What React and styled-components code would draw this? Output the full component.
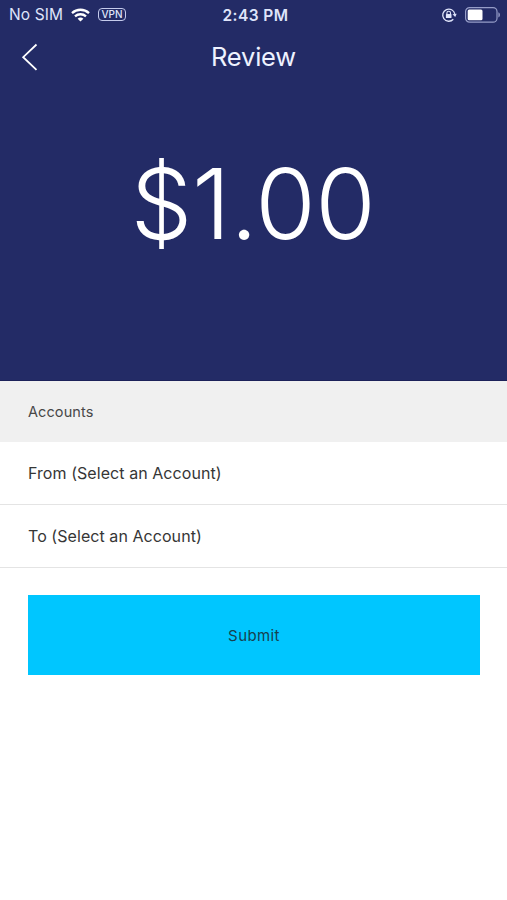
import React from "react";
import styled, { createGlobalStyle } from "styled-components";

const GlobalStyle = createGlobalStyle`
  * { box-sizing: border-box; }
  body { margin: 0; background: #fff; font-family: Inter, "Liberation Sans", sans-serif; }
`;

const Screen = styled.main`
  display: flex;
  flex-direction: column;
  width: 100%;
  height: 900px;
  overflow: hidden;
  background: #fff;
`;

const Hero = styled.header`
  display: flex;
  flex-direction: column;
  height: 381px;
  background: #232b66;
  border-bottom: 1px solid #1c2159;
  color: #fff;
`;

const StatusBar = styled.div`
  display: grid;
  grid-template-columns: 1fr auto 1fr;
  align-items: center;
  height: 30px;
  padding: 0 6px 0 9px;
  color: #dfe4fa;
`;

const StatusGroup = styled.div`
  display: flex;
  align-items: center;
  justify-content: ${({ $end }) => ($end ? "flex-end" : "flex-start")};
  gap: 8px;
`;

const Carrier = styled.span`
  font-size: 15.5px;
  line-height: 20px;
  letter-spacing: 0.1px;
  white-space: nowrap;
`;

const Clock = styled.span`
  padding: 1px 0 0 1px;
  font-size: 15.5px;
  font-weight: 600;
  line-height: 20px;
  letter-spacing: 0.45px;
`;

const VpnBadge = styled.span`
  display: flex;
  align-items: center;
  justify-content: center;
  width: 28px;
  height: 13px;
  margin-bottom: 1px;
  border: 1px solid #c5cbec;
  border-radius: 4px;
  font-size: 10px;
  font-weight: 500;
  line-height: 11px;
`;

const NavBar = styled.nav`
  display: grid;
  grid-template-columns: 60px 1fr 60px;
  align-items: center;
  height: 54px;
`;

const BackButton = styled.button`
  display: flex;
  align-items: center;
  height: 54px;
  padding: 0 0 0 21px;
  border: 0;
  background: none;
  color: #fff;
`;

const Title = styled.h1`
  margin: 0;
  font-size: 25.5px;
  font-weight: 400;
  line-height: 32px;
  letter-spacing: -0.2px;
  text-align: center;
  color: #eef2ff;
`;

const Amount = styled.div`
  padding: 60px 1px 0 0;
  font-size: 98px;
  font-weight: 300;
  line-height: 120px;
  letter-spacing: -0.3px;
  text-align: center;
  white-space: nowrap;
`;

const SectionHeader = styled.h2`
  display: flex;
  align-items: center;
  height: 61px;
  margin: 0;
  padding: 0 28px;
  background: #f0f0f0;
  color: #484848;
  font-size: 14.5px;
  font-weight: 400;
  letter-spacing: 0.1px;
`;

const AccountRow = styled.div`
  display: flex;
  align-items: center;
  height: 63px;
  padding: 0 28px;
  border-bottom: 1px solid #e4e4e4;
  color: #363636;
  font-size: 16px;
  letter-spacing: 0.06px;
`;

const Actions = styled.div`
  padding: 27px 27px 0 28px;
`;

const SubmitButton = styled.button`
  display: block;
  width: 100%;
  height: 80px;
  padding: 0;
  border: 0;
  background: #00c6ff;
  color: #17414e;
  font-family: inherit;
  font-size: 15px;
  letter-spacing: 0.4px;
`;

const WifiIcon = () => (
  <svg width="19" height="14" viewBox="0 0 19 14" fill="none" stroke="#fff" strokeWidth="2.3">
    <path d="M1 5.2C5.8.6 13.2.6 18 5.2" />
    <path d="M4 8.4c3.1-2.9 7.9-2.9 11 0" />
    <path d="M9.5 13.6 6.6 10.7c1.6-1.5 4.2-1.5 5.8 0Z" fill="#fff" stroke="none" />
  </svg>
);

const RotationLockIcon = () => (
  <svg width="16" height="16" viewBox="0 0 16 16" fill="none" stroke="#dfe4fa" strokeWidth="1.3">
    <path d="M12.3 12.3A6.1 6.1 0 1 1 13.8 7" />
    <path d="m11.5 7.2 4.2-.5-1.5 3.2Z" fill="#dfe4fa" stroke="none" />
    <path d="M5.9 7.5V6a1.8 1.8 0 0 1 3.6 0v1.5" strokeWidth="1.1" />
    <rect x="4.9" y="7.1" width="5.6" height="4" rx=".6" fill="#dfe4fa" stroke="none" />
  </svg>
);

const BatteryIcon = () => (
  <svg width="36" height="16" viewBox="0 0 36 16">
    <rect x=".6" y=".6" width="31.4" height="14.6" rx="4" fill="none" stroke="#969dc8" strokeWidth="1.2" />
    <rect x="2.7" y="2.6" width="14.8" height="10.6" rx="1.5" fill="#fff" />
    <path d="M33.4 5.3c2 .9 2 4.3 0 5.2Z" fill="#969dc8" />
  </svg>
);

const BackIcon = () => (
  <svg width="17" height="28" viewBox="0 0 17 28" fill="none" stroke="currentColor" strokeWidth="1.8">
    <path d="M15.5 1.5 2.2 14.2l13.3 12.7" />
  </svg>
);

export default function App() {
  return (
    <>
      <GlobalStyle />
      <Screen>
        <Hero>
          <StatusBar>
            <StatusGroup>
              <Carrier>No SIM</Carrier>
              <WifiIcon />
              <VpnBadge>VPN</VpnBadge>
            </StatusGroup>
            <Clock>2:43 PM</Clock>
            <StatusGroup $end>
              <RotationLockIcon />
              <BatteryIcon />
            </StatusGroup>
          </StatusBar>
          <NavBar>
            <BackButton aria-label="Back">
              <BackIcon />
            </BackButton>
            <Title>Review</Title>
          </NavBar>
          <Amount>$1.00</Amount>
        </Hero>
        <SectionHeader>Accounts</SectionHeader>
        <AccountRow>From (Select an Account)</AccountRow>
        <AccountRow>To (Select an Account)</AccountRow>
        <Actions>
          <SubmitButton>Submit</SubmitButton>
        </Actions>
      </Screen>
    </>
  );
}
